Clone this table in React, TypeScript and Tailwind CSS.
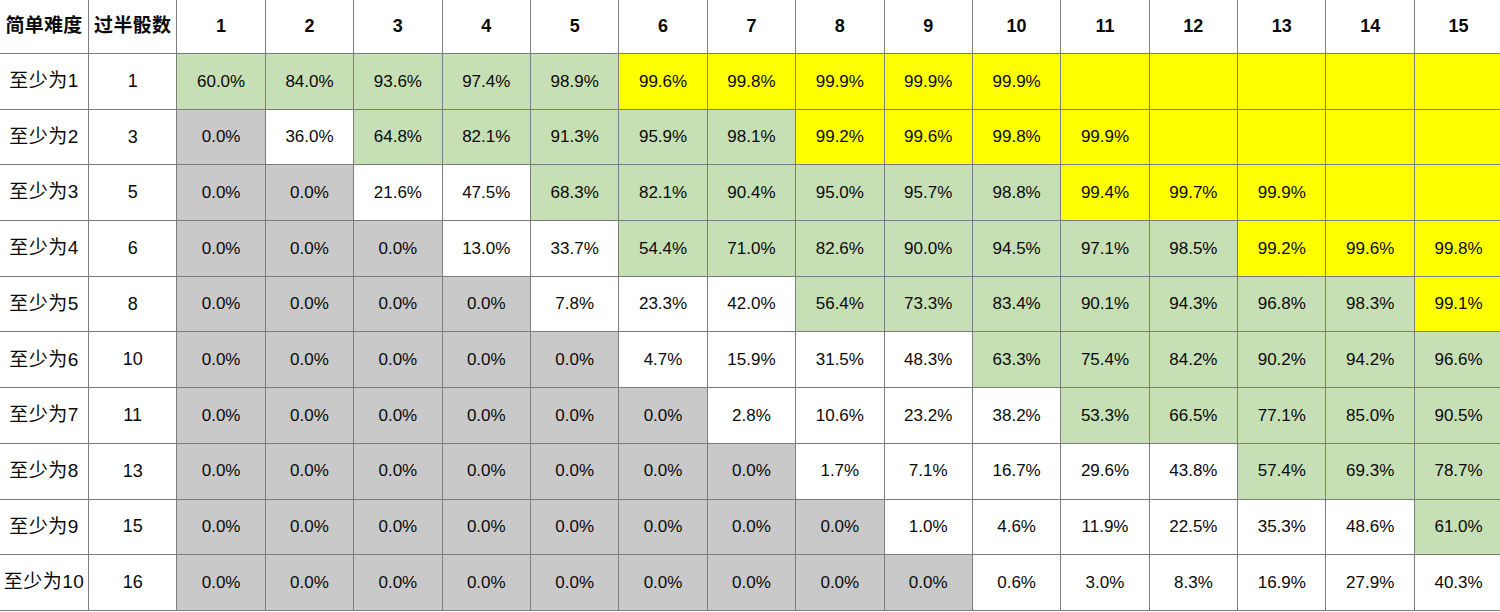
import React from "react";

type Cell = number | null;

const rows: { label: string; dice: number; vals: Cell[] }[] = [
  { label: "至少为1", dice: 1, vals: [60.0, 84.0, 93.6, 97.4, 98.9, 99.6, 99.8, 99.9, 99.9, 99.9, null, null, null, null, null] },
  { label: "至少为2", dice: 3, vals: [0, 36.0, 64.8, 82.1, 91.3, 95.9, 98.1, 99.2, 99.6, 99.8, 99.9, null, null, null, null] },
  { label: "至少为3", dice: 5, vals: [0, 0, 21.6, 47.5, 68.3, 82.1, 90.4, 95.0, 95.7, 98.8, 99.4, 99.7, 99.9, null, null] },
  { label: "至少为4", dice: 6, vals: [0, 0, 0, 13.0, 33.7, 54.4, 71.0, 82.6, 90.0, 94.5, 97.1, 98.5, 99.2, 99.6, 99.8] },
  { label: "至少为5", dice: 8, vals: [0, 0, 0, 0, 7.8, 23.3, 42.0, 56.4, 73.3, 83.4, 90.1, 94.3, 96.8, 98.3, 99.1] },
  { label: "至少为6", dice: 10, vals: [0, 0, 0, 0, 0, 4.7, 15.9, 31.5, 48.3, 63.3, 75.4, 84.2, 90.2, 94.2, 96.6] },
  { label: "至少为7", dice: 11, vals: [0, 0, 0, 0, 0, 0, 2.8, 10.6, 23.2, 38.2, 53.3, 66.5, 77.1, 85.0, 90.5] },
  { label: "至少为8", dice: 13, vals: [0, 0, 0, 0, 0, 0, 0, 1.7, 7.1, 16.7, 29.6, 43.8, 57.4, 69.3, 78.7] },
  { label: "至少为9", dice: 15, vals: [0, 0, 0, 0, 0, 0, 0, 0, 1.0, 4.6, 11.9, 22.5, 35.3, 48.6, 61.0] },
  { label: "至少为10", dice: 16, vals: [0, 0, 0, 0, 0, 0, 0, 0, 0, 0.6, 3.0, 8.3, 16.9, 27.9, 40.3] },
];

function bgFor(rowIdx: number, v: Cell): string {
  if (v === null) return "bg-[#ffff00]";
  if (v >= 99) return "bg-[#ffff00]";
  if (v >= 50) return "bg-[#c6dfb4]";
  if (v === 0 && rowIdx > 0) return "bg-[#c9c9c9]";
  return "bg-white";
}

const font = { fontFamily: '"Liberation Sans", "Noto Sans CJK SC", sans-serif' };

export default function App() {
  const cellBase = "flex items-center justify-center text-[17px] text-[#0a0a0a]";
  return (
    <div className="w-[1500px] h-[612px] overflow-hidden bg-white" style={font}>
      <div className="grid grid-cols-[88px_repeat(16,87.4px)] grid-rows-[53px_repeat(10,54.7px)] gap-px bg-[#7d7d7d] pb-px w-[1503px]">
        <div className={`${cellBase} bg-white font-bold text-[19px] tracking-[0.3px]`}>简单难度</div>
        <div className={`${cellBase} bg-white font-bold text-[19px] tracking-[0.3px]`}>过半骰数</div>
        {Array.from({ length: 15 }, (_, i) => (
          <div key={i} className={`${cellBase} bg-white font-bold text-[18px]`}>
            {i + 1}
          </div>
        ))}
        {rows.map((r, ri) => (
          <React.Fragment key={ri}>
            <div className={`${cellBase} bg-white text-[19px] tracking-[0.5px]`}>{r.label}</div>
            <div className={`${cellBase} bg-white text-[18px]`}>{r.dice}</div>
            {r.vals.map((v, ci) => (
              <div key={ci} className={`${cellBase} ${bgFor(ri, v)}`}>
                {v === null ? "" : `${v.toFixed(1)}%`}
              </div>
            ))}
          </React.Fragment>
        ))}
      </div>
    </div>
  );
}
